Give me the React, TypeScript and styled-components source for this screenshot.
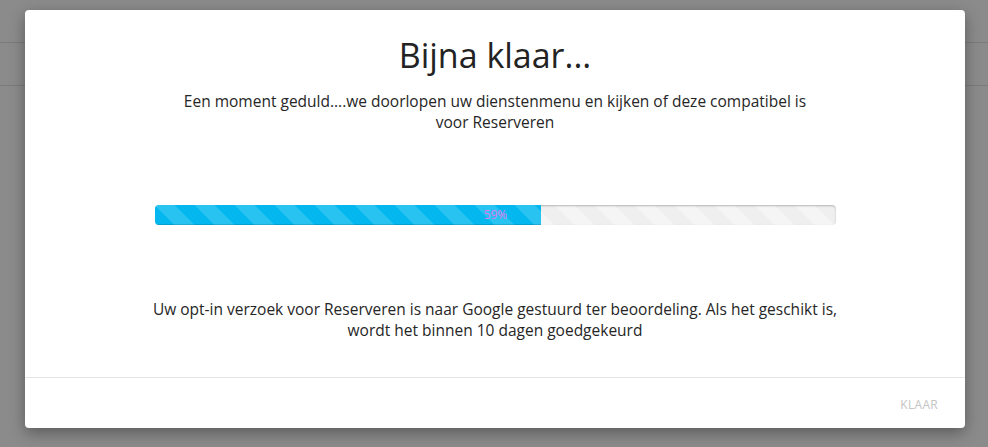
import React from "react";
import styled, { createGlobalStyle } from "styled-components";

const GlobalStyle = createGlobalStyle`
  html, body {
    margin: 0;
    padding: 0;
    background: #8b8b8b;
    font-family: "Open Sans", "Noto Sans", sans-serif;
  }
`;

const Page = styled.div`
  width: 988px;
  height: 447px;
  overflow: hidden;
  background: #8b8b8b;
`;

const PageBar = styled.div`
  height: 42px;
  border-bottom: 1px solid #7b7b7b;
`;

const Modal = styled.div`
  position: absolute;
  top: 10px;
  left: 25px;
  width: 940px;
  height: 418px;
  background: #fff;
  border-radius: 4px;
  box-shadow: 0 5px 15px rgba(0, 0, 0, 0.35);
  display: flex;
  flex-direction: column;
`;

const Body = styled.div`
  flex: 1;
  display: flex;
  flex-direction: column;
  align-items: center;
  padding-top: 27px;
  color: #262626;
`;

const Title = styled.h1`
  margin: 0;
  font-size: 34px;
  font-weight: 400;
  line-height: 36px;
  color: #222;
`;

const Text = styled.p<{ $max: number }>`
  margin: 0;
  max-width: ${(p) => p.$max}px;
  font-size: 15.5px;
  line-height: 21px;
  text-align: center;
`;

const Intro = styled(Text)`
  margin-top: 18px;
`;

const Outro = styled(Text)`
  margin-top: 74px;
`;

const stripes = (alpha: number) => `linear-gradient(
    45deg,
    rgba(255, 255, 255, ${alpha}) 25%,
    transparent 25%,
    transparent 50%,
    rgba(255, 255, 255, ${alpha}) 50%,
    rgba(255, 255, 255, ${alpha}) 75%,
    transparent 75%,
    transparent
  )`;

const Track = styled.div`
  position: relative;
  margin-top: 72px;
  width: 681px;
  height: 20px;
  border-radius: 4px;
  overflow: hidden;
  background-color: #efefef;
  background-image: ${stripes(0.35)};
  background-size: 40px 40px;
  box-shadow: inset 0 1px 2px rgba(0, 0, 0, 0.25);
`;

const Fill = styled.div`
  height: 100%;
  display: flex;
  justify-content: flex-end;
  align-items: center;
  padding-right: 34px;
  box-sizing: border-box;
  background-color: #04b8ef;
  background-image: ${stripes(0.15)};
  background-size: 40px 40px;
  box-shadow: inset 0 -1px 0 rgba(0, 0, 0, 0.12);
`;

const Percent = styled.span`
  font-size: 12px;
  line-height: 20px;
  color: #d77cf2;
`;

const Footer = styled.div`
  height: 50px;
  border-top: 1px solid #e5e5e5;
  display: flex;
  align-items: center;
  justify-content: flex-end;
  padding-right: 27px;
`;

const FooterButton = styled.button`
  border: none;
  background: none;
  padding: 0;
  margin-top: 2px;
  font-family: inherit;
  font-size: 12px;
  letter-spacing: 0.3px;
  text-transform: uppercase;
  color: #c4c4c4;
  cursor: default;
`;

export default function App() {
  const progress = 56.8;
  return (
    <Page>
      <GlobalStyle />
      <PageBar />
      <PageBar />
      <Modal>
        <Body>
          <Title>Bijna klaar...</Title>
          <Intro $max={640}>
            Een moment geduld....we doorlopen uw dienstenmenu en kijken of deze
            compatibel is voor Reserveren
          </Intro>
          <Track>
            <Fill style={{ width: `${progress}%` }}>
              <Percent>59%</Percent>
            </Fill>
          </Track>
          <Outro $max={700}>
            Uw opt-in verzoek voor Reserveren is naar Google gestuurd ter
            beoordeling. Als het geschikt is, wordt het binnen 10 dagen
            goedgekeurd
          </Outro>
        </Body>
        <Footer>
          <FooterButton>Klaar</FooterButton>
        </Footer>
      </Modal>
    </Page>
  );
}
